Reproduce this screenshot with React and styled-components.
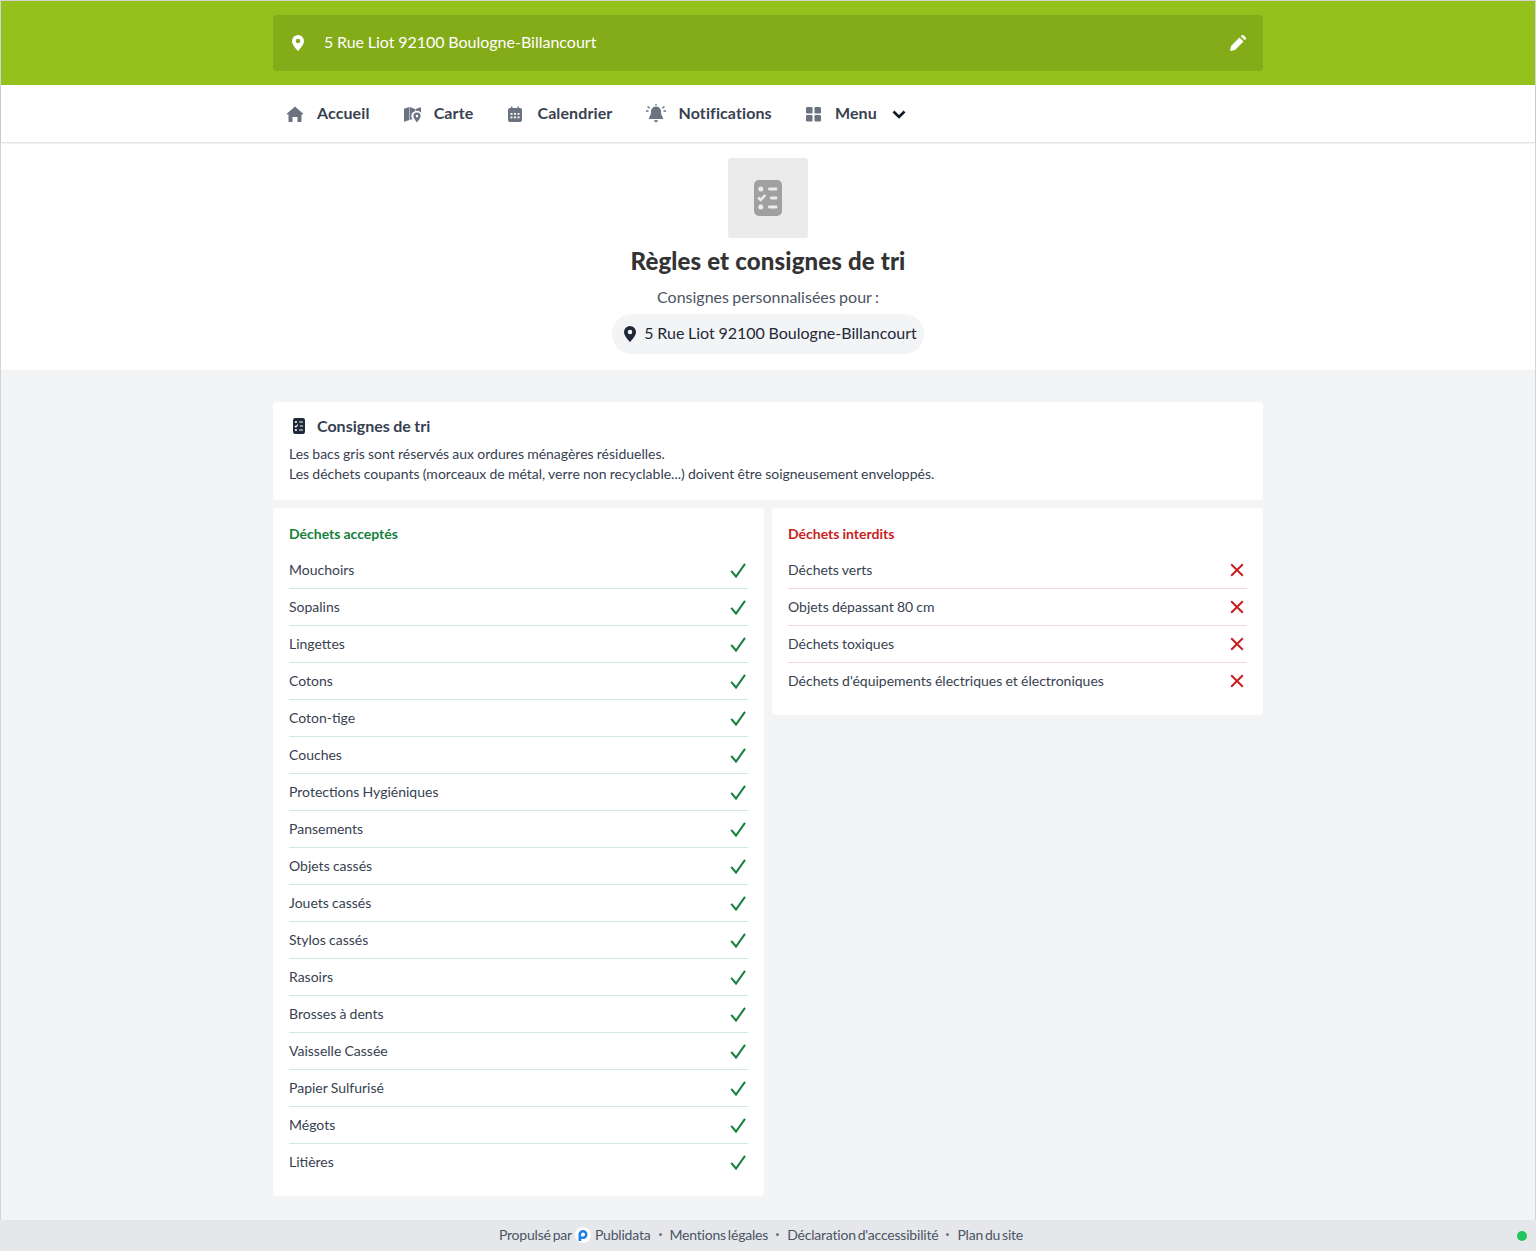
import React from "react";
import styled, { createGlobalStyle } from "styled-components";

const GlobalStyle = createGlobalStyle`
  * { box-sizing: border-box; }
  html, body { margin: 0; padding: 0; }
  body {
    font-family: Lato, "Liberation Sans", sans-serif;
    background: #f3f4f6;
    color: #374151;
    word-spacing: -0.4px;
  }
`;

const Page = styled.div`
  display: flex;
  flex-direction: column;
  height: 1251px;
  border: 1px solid #d4d4d4;
  border-bottom: none;
  background: #f3f4f6;
`;

const AddressBar = styled.header`
  height: 84px;
  padding: 14px 272px;
  background: #95c11c;
`;

const AddressInner = styled.div`
  display: flex;
  align-items: center;
  height: 56px;
  padding: 0 17px 0 19px;
  border-radius: 4px;
  background: #84ab18;
  color: #fff;
  font-size: 16px;

  & > svg:first-child { margin-right: 20px; }
  & > svg:last-child { margin-left: auto; }
`;

const AddressText = styled.span`
  padding-bottom: 4px;
`;

const Nav = styled.nav`
  display: flex;
  align-items: center;
  position: relative;
  height: 57px;
  padding: 0 272px;
  background: #fff;
  box-shadow: 0 1px 2px rgba(0, 0, 0, .15);
`;

const NavItem = styled.div`
  display: flex;
  align-items: center;
  gap: ${(p) => p.$gap || 12}px;
  padding: 0 12px;
  margin-right: 8.2px;
  font-size: 16px;
  font-weight: 700;
  letter-spacing: .1px;
  color: #374151;

  & > svg:first-child { color: #6b7280; }
`;

const NavLabel = styled.span`
  padding-bottom: 3px;
`;

const Chevron = styled.svg`
  width: 24px;
  height: 24px;
  margin-left: -1px;
  color: #111827;
`;

const Hero = styled.section`
  display: flex;
  flex-direction: column;
  align-items: center;
  height: 228px;
  padding-top: 16px;
  background: #fff;
`;

const HeroIcon = styled.div`
  display: flex;
  align-items: center;
  justify-content: center;
  width: 80px;
  height: 80px;
  border-radius: 3px;
  background: #ebebeb;
`;

const Title = styled.h1`
  margin: 7px 0 0;
  font-size: 24px;
  line-height: 32px;
  font-weight: 900;
  letter-spacing: .15px;
  color: #333;
  word-spacing: 0;
`;

const Subtitle = styled.p`
  margin: 8px 0 0;
  font-size: 16px;
  line-height: 24px;
  color: #4b5563;
  word-spacing: -0.7px;
`;

const Pill = styled.div`
  display: flex;
  align-items: center;
  gap: 8px;
  height: 40px;
  margin-top: 5px;
  padding: 0 7px 0 12px;
  border-radius: 20px;
  background: #f3f4f6;
  color: #1f2937;
  font-size: 16px;
`;

const PillText = styled.span`
  padding-bottom: 4px;
`;

const Main = styled.main`
  flex: 1;
  padding: 32px 272px 0;
`;

const Card = styled.section`
  padding: 12px 16px 16px;
  border-radius: 4px;
  background: #fff;
`;

const CardTitle = styled.h2`
  display: flex;
  align-items: center;
  gap: 12px;
  margin: 0 0 6px;
  font-size: 16px;
  line-height: 24px;
  font-weight: 700;
  color: #374151;

  & > svg { margin-left: 4px; }
`;

const CardText = styled.p`
  margin: 0;
  font-size: 14px;
  line-height: 20px;
  color: #374151;
`;

const Columns = styled.div`
  display: grid;
  grid-template-columns: 1fr 1fr;
  gap: 8px;
  align-items: start;
  margin-top: 8px;
`;

const ListCard = styled.section`
  padding: 16px 16px 15px;
  border-radius: 4px;
  background: #fff;
`;

const ListTitle = styled.h3`
  margin: 0 0 8px;
  font-size: 14px;
  line-height: 20px;
  font-weight: 700;
  color: ${(p) => p.$color};
`;

const Row = styled.div`
  display: flex;
  align-items: center;
  justify-content: space-between;
  height: 37px;
  font-size: 14px;
  color: #374151;
  border-bottom: 1px solid ${(p) => p.$line};

  &:last-child { border-bottom-color: transparent; }
`;

const RowText = styled.span`
  padding-bottom: 2px;
`;

const Footer = styled.footer`
  display: flex;
  align-items: center;
  justify-content: center;
  position: relative;
  height: 31px;
  margin: 0 -1px;
  padding: 0 14px 2px 0;
  background: #e5e7eb;
  color: #4b5563;
  font-size: 14px;
  letter-spacing: -0.2px;
  word-spacing: -1.5px;
`;

const Dot = styled.span`
  width: 3px;
  height: 3px;
  margin: 0 8px;
  border-radius: 50%;
  background: #6b7280;
`;

const StatusDot = styled.span`
  position: absolute;
  right: 9px;
  top: 11px;
  width: 10px;
  height: 10px;
  border-radius: 50%;
  background: #22c55e;
`;

const ChecklistIcon = ({ width, height, color, inner }) => (
  <svg width={width} height={height} viewBox="0 0 28 36" fill="none" preserveAspectRatio="none">
    <rect width="28" height="36" rx="5" fill={color} />
    <circle cx="6.800" cy="9" r="2.500" fill={inner} />
    <rect x="14" y="7.600" width="9.500" height="2.800" rx="1.400" fill={inner} />
    <path d="M4.200 17.500l2.500 2.500 4.600-5" stroke={inner} strokeWidth="2.500" />
    <rect x="16" y="16.600" width="7.500" height="2.800" rx="1.400" fill={inner} />
    <circle cx="6.800" cy="27" r="2.500" fill={inner} />
    <rect x="14" y="25.600" width="9.500" height="2.800" rx="1.400" fill={inner} />
  </svg>
);

const PinIcon = () => (
  <svg width="12" height="16" viewBox="0 0 12 16" fill="currentColor">
    <path fillRule="evenodd" d="M6 0a6 6 0 0 0-6 6c0 3.600 4 8 6 10 2-2 6-6.400 6-10a6 6 0 0 0-6-6zm0 3.700a2.300 2.300 0 1 1 0 4.600 2.300 2.300 0 0 1 0-4.600z" />
  </svg>
);

const PencilIcon = () => (
  <svg width="16" height="16" viewBox="0 0 16 16" fill="currentColor">
    <path d="M0 16l1-5L9.500 2.500 13.500 6.500 5 15zM10.800 1.200l.6-.6a1.800 1.800 0 0 1 2.500 0l1.500 1.500a1.800 1.800 0 0 1 0 2.500l-.6.600z" />
  </svg>
);

const HomeIcon = () => (
  <svg width="20" height="20" viewBox="0 0 20 20" fill="currentColor">
    <path d="M10 2.500 18 9.500a.6.600 0 0 1-.4 1H16.500V17a1 1 0 0 1-1 1H12.500v-5h-5v5H4.500a1 1 0 0 1-1-1v-6.500H2.400a.6.600 0 0 1-.4-1z" />
  </svg>
);

const MapIcon = () => (
  <svg width="20" height="20" viewBox="0 0 20 20" fill="currentColor">
    <path d="M2 4.800 7.400 3v13L3 17.600a.7.7 0 0 1-1-.6zM7.900 3l5.100 2v2.300a5 5 0 0 0-3.700 4.700c0 1.100.5 2.400 1.200 3.600L7.900 15.500zM13.500 5l4.500-1.600a.7.7 0 0 1 1 .6v4.800A5 5 0 0 0 13.500 7z" />
    <path fillRule="evenodd" d="M15 8.500a3.600 3.600 0 0 0-3.600 3.600c0 2.300 3.600 6.400 3.600 6.400s3.600-4.100 3.600-6.400A3.600 3.600 0 0 0 15 8.500zm0 2.300a1.300 1.300 0 1 1 0 2.600 1.300 1.300 0 0 1 0-2.600z" />
  </svg>
);

const CalendarIcon = () => (
  <svg width="20" height="20" viewBox="0 0 20 20" fill="currentColor">
    <path fillRule="evenodd" d="M6 2.500h1.500V4h5V2.500H14V4h1a2 2 0 0 1 2 2v10a2 2 0 0 1-2 2H5a2 2 0 0 1-2-2V6a2 2 0 0 1 2-2h1zM5.500 9v1.800h2V9zm3.500 0v1.800h2V9zm3.500 0v1.800h2V9zm-7 3.500v1.800h2v-1.800zm3.500 0v1.800h2v-1.800zm3.500 0v1.800h2v-1.800z" />
  </svg>
);

const AlarmIcon = () => (
  <svg width="22" height="20" viewBox="0 0 22 20" fill="currentColor">
    <path d="M11 2.500a5 5 0 0 0-5 5c0 2.800-.8 4.700-2 6V15h14v-1.500c-1.200-1.300-2-3.200-2-6a5 5 0 0 0-5-5zM9 16.200h4a2 2 0 0 1-4 0z" />
    <path d="M11 0v1.500M1 7h2.500M18.500 7H21M2.500 2.500l2.200 1.700M19.500 2.500l-2.200 1.700" stroke="currentColor" strokeWidth="1.400" />
  </svg>
);

const GridIcon = () => (
  <svg width="20" height="20" viewBox="0 0 20 20" fill="currentColor">
    <rect x="2" y="3" width="6.500" height="6.500" rx="1.200" />
    <rect x="10.500" y="3" width="6.500" height="6.500" rx="1.200" />
    <rect x="2" y="11" width="6.500" height="6.500" rx="1.200" />
    <rect x="10.500" y="11" width="6.500" height="6.500" rx="1.200" />
  </svg>
);

const CheckIcon = () => (
  <svg width="20" height="20" viewBox="0 0 20 20" fill="none" stroke="#15803d" strokeWidth="2">
    <path d="M3.200 10.800 8 16.500 17 3.800" />
  </svg>
);

const CrossIcon = () => (
  <svg width="20" height="20" viewBox="0 0 20 20" fill="none" stroke="#c81e1e" strokeWidth="2">
    <path d="M4.200 4.200l11.600 11.600M15.800 4.200 4.200 15.800" />
  </svg>
);

const PublidataLogo = () => (
  <svg width="16" height="16" viewBox="0 0 16 16" style={{ margin: "0 4px 0 3px" }}>
    <circle cx="8" cy="8" r="8" fill="#fff" />
    <path fillRule="evenodd" fill="#1a7fe8" d="M3.500 14V7.500a4.500 4.500 0 1 1 4.500 4.500H6.200v2zM8 5.500a2 2 0 0 0-1.900 2v2H8a2 2 0 0 0 0-4z" />
  </svg>
);

const accepted = ["Mouchoirs", "Sopalins", "Lingettes", "Cotons", "Coton-tige", "Couches", "Protections Hygiéniques", "Pansements", "Objets cassés", "Jouets cassés", "Stylos cassés", "Rasoirs", "Brosses à dents", "Vaisselle Cassée", "Papier Sulfurisé", "Mégots", "Litières"];
const refused = ["Déchets verts", "Objets dépassant 80 cm", "Déchets toxiques", "Déchets d'équipements électriques et électroniques"];

export default function App() {
  return (
    <>
      <GlobalStyle />
      <Page>
        <AddressBar>
          <AddressInner>
            <PinIcon />
            <AddressText>5 Rue Liot 92100 Boulogne-Billancourt</AddressText>
            <PencilIcon />
          </AddressInner>
        </AddressBar>
        <Nav>
          <NavItem><HomeIcon /><NavLabel>Accueil</NavLabel></NavItem>
          <NavItem><MapIcon /><NavLabel>Carte</NavLabel></NavItem>
          <NavItem><CalendarIcon /><NavLabel>Calendrier</NavLabel></NavItem>
          <NavItem><AlarmIcon /><NavLabel>Notifications</NavLabel></NavItem>
          <NavItem $gap={11}>
            <GridIcon />
            <NavLabel>Menu</NavLabel>
            <Chevron viewBox="0 0 24 24" fill="none" stroke="currentColor" strokeWidth="2.600"><path d="M6.500 9.500 12 15l5.500-5.500" /></Chevron>
          </NavItem>
        </Nav>
        <Hero>
          <HeroIcon><ChecklistIcon width={28} height={36} color="#a0a0a0" inner="#ebebeb" /></HeroIcon>
          <Title>Règles et consignes de tri</Title>
          <Subtitle>Consignes personnalisées pour :</Subtitle>
          <Pill><PinIcon /><PillText>5 Rue Liot 92100 Boulogne-Billancourt</PillText></Pill>
        </Hero>
        <Main>
          <Card>
            <CardTitle><ChecklistIcon width={12} height={16} color="#1f2937" inner="#fff" />Consignes de tri</CardTitle>
            <CardText>Les bacs gris sont réservés aux ordures ménagères résiduelles.</CardText>
            <CardText>Les déchets coupants (morceaux de métal, verre non recyclable...) doivent être soigneusement enveloppés.</CardText>
          </Card>
          <Columns>
            <ListCard>
              <ListTitle $color="#15803d">Déchets acceptés</ListTitle>
              {accepted.map((name) => (
                <Row key={name} $line="#d1e7e0"><RowText>{name}</RowText><CheckIcon /></Row>
              ))}
            </ListCard>
            <ListCard>
              <ListTitle $color="#c81e1e">Déchets interdits</ListTitle>
              {refused.map((name) => (
                <Row key={name} $line="#f8d7da"><RowText>{name}</RowText><CrossIcon /></Row>
              ))}
            </ListCard>
          </Columns>
        </Main>
        <Footer>
          <span>Propulsé par</span>
          <PublidataLogo />
          <span>Publidata</span>
          <Dot />
          <span>Mentions légales</span>
          <Dot />
          <span>Déclaration d'accessibilité</span>
          <Dot />
          <span>Plan du site</span>
          <StatusDot />
        </Footer>
      </Page>
    </>
  );
}
